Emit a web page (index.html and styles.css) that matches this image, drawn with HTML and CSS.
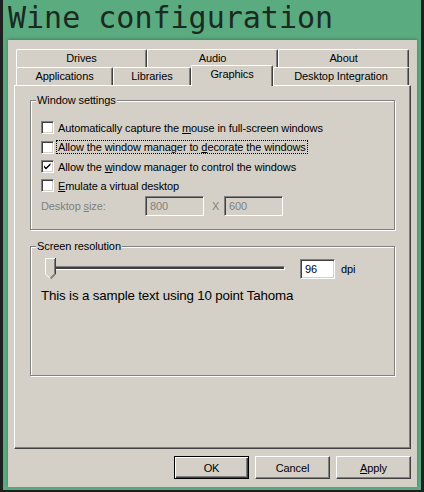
FILE: index.html
```html
<!DOCTYPE html>
<html>
<head>
<meta charset="utf-8">
<link rel="stylesheet" href="styles.css">
</head>
<body>
<div class="frame">
  <div class="title">Wine configuration</div>
  <div class="dialog">
    <div class="tabs">
      <div class="tabrow">
        <div class="tab w131">Drives</div>
        <div class="tab w131">Audio</div>
        <div class="tab w131">About</div>
      </div>
      <div class="tabrow">
        <div class="tab w97">Applications</div>
        <div class="tab w78">Libraries</div>
        <div class="tab w82 selected">Graphics</div>
        <div class="tab w136">Desktop Integration</div>
      </div>
    </div>
    <div class="panel">
      <div class="group g1">
        <div class="legend">Window settings</div>
        <div class="rows">
          <div class="row r19"><span class="cb"></span><span class="lbl">Automatically capture the <u>m</u>ouse in full-screen windows</span></div>
          <div class="row r20"><span class="cb"></span><span class="lbl focus">Allow the window manager to <u>d</u>ecorate the windows</span></div>
          <div class="row r19"><span class="cb checked"><svg width="9" height="9" viewBox="0 0 9 9"><path d="M1 3.5 L3 5.5 L7.5 1 L7.5 3 L3 7.5 L1 5.5 Z" fill="#000"/></svg></span><span class="lbl">Allow the <u>w</u>indow manager to control the windows</span></div>
          <div class="row r19"><span class="cb"></span><span class="lbl"><u>E</u>mulate a virtual desktop</span></div>
          <div class="row sizerow">
            <span class="dslabel">Desktop <u>s</u>ize:</span>
            <span class="edit disabled">800</span>
            <span class="xsep">X</span>
            <span class="edit disabled">600</span>
          </div>
        </div>
      </div>
      <div class="group g2">
        <div class="legend">Screen resolution</div>
        <div class="dpirow">
          <div class="slider">
            <div class="track"></div>
            <svg class="thumb" width="11" height="22" viewBox="0 0 11 22">
              <polygon points="0.5,0.5 10.5,0.5 10.5,16 5.5,21 0.5,16" fill="#d4d0c8"/>
              <polyline points="0.5,16 0.5,0.5 10,0.5" fill="none" stroke="#fff" stroke-width="1"/>
              <polyline points="10.5,0 10.5,16 5.5,21" fill="none" stroke="#404040" stroke-width="1"/>
              <polyline points="9.5,1 9.5,15.6 5.5,19.6" fill="none" stroke="#808080" stroke-width="1"/>
              <line x1="0.5" y1="16" x2="5" y2="20.5" stroke="#fff" stroke-width="1"/>
            </svg>
          </div>
          <span class="edit dpi">96</span>
          <span class="dpilbl">dpi</span>
        </div>
        <div class="sample">This is a sample text using 10 point Tahoma</div>
      </div>
    </div>
    <div class="buttons">
      <div class="btn default"><span>OK</span></div>
      <div class="btn"><span>Cancel</span></div>
      <div class="btn"><span><u>A</u>pply</span></div>
    </div>
  </div>
</div>
</body>
</html>
```
FILE: styles.css
```css
html, body {
  margin: 0;
  padding: 0;
}
body {
  background: #1e201f;
  width: 424px;
  height: 492px;
  overflow: hidden;
  font-family: "Liberation Sans", Arial, sans-serif;
  font-size: 11px;
  letter-spacing: -0.1px;
  color: #000;
}
.frame {
  margin: 0 3px;
  height: 490px;
  box-sizing: border-box;
  background: #5aac80;
  padding: 0 4px 3px 5px;
  display: flex;
  flex-direction: column;
}
.title {
  height: 40px;
  flex: none;
  font-family: "DejaVu Sans Mono", monospace;
  font-size: 30px;
  letter-spacing: 0;
  line-height: 35px;
  color: #1b2a21;
  white-space: nowrap;
  overflow: hidden;
}
.dialog {
  flex: 1;
  background: #d4d0c8;
  padding: 9px 6px 0 6px;
  box-shadow: 0 -1px 3px rgba(0, 0, 0, 0.25);
  display: flex;
  flex-direction: column;
}
.tabs {
  margin: 0 2px;
  display: flex;
  flex-direction: column;
}
.tabrow {
  display: flex;
  height: 18px;
}
.tab {
  box-sizing: border-box;
  height: 18px;
  border-top: 1px solid #fff;
  border-left: 1px solid #fff;
  border-right: 1px solid #404040;
  border-top-left-radius: 2px;
  border-top-right-radius: 2px;
  box-shadow: inset -1px 0 0 #808080;
  background: #d4d0c8;
  text-align: center;
  line-height: 16px;
  white-space: nowrap;
}
.w131 { width: 131px; }
.w97 { width: 97px; }
.w78 { width: 78px; }
.w82 { width: 82px; }
.w136 { width: 136px; }
.tab.selected {
  height: 21px;
  margin-top: -2px;
  line-height: 16px;
  position: relative;
  z-index: 1;
}
.panel {
  box-sizing: border-box;
  height: 364px;
  border: 1px solid;
  border-color: #fff #404040 #404040 #fff;
  box-shadow: inset -1px -1px 0 #808080;
  padding: 14px 15px 0 15px;
  display: flex;
  flex-direction: column;
}
.group {
  box-sizing: border-box;
  height: 130px;
  border: 1px solid #808080;
  box-shadow: inset 1px 1px 0 #fff, 1px 1px 0 #fff;
  display: flex;
  flex-direction: column;
}
.g2 {
  margin-top: 16px;
}
.legend {
  align-self: flex-start;
  margin: -7px 0 0 5px;
  padding: 0 1px;
  height: 13px;
  line-height: 13px;
  background: #d4d0c8;
}
.rows {
  margin-top: 11px;
  display: flex;
  flex-direction: column;
}
.row {
  display: flex;
  align-items: center;
  padding-left: 10px;
}
.r19 { height: 19px; }
.r20 { height: 20px; }
.cb {
  box-sizing: border-box;
  width: 13px;
  height: 13px;
  flex: none;
  background: #fff;
  border: 1px solid;
  border-color: #808080 #fff #fff #808080;
  box-shadow: inset 1px 1px 0 #404040, inset -1px -1px 0 #d4d0c8;
  display: flex;
  align-items: center;
  justify-content: center;
  margin-right: 4px;
}
.cb svg {
  display: block;
}
.lbl {
  white-space: nowrap;
  line-height: 12px;
}
.focus {
  outline: 1px dotted #000;
  outline-offset: 0;
  margin-left: -1px;
  padding: 0 1px;
}
.sizerow {
  height: 20px;
  margin-top: 1px;
  color: #808080;
}
.dslabel {
  width: 104px;
  flex: none;
}
.edit {
  box-sizing: border-box;
  height: 20px;
  border: 1px solid;
  border-color: #808080 #fff #fff #808080;
  box-shadow: inset 1px 1px 0 #404040, inset -1px -1px 0 #d4d0c8;
  padding-left: 4px;
  line-height: 18px;
}
.edit.disabled {
  width: 59px;
  background: #d4d0c8;
  color: #808080;
}
.xsep {
  margin: 0 5px 0 8px;
  width: 7px;
}
.dpirow {
  display: flex;
  align-items: center;
  margin-top: 5px;
  height: 21px;
  padding-left: 13px;
}
.slider {
  position: relative;
  width: 241px;
  height: 21px;
  margin-right: 15px;
}
.track {
  position: absolute;
  left: 8px;
  right: 0;
  top: 8px;
  height: 4px;
  box-sizing: border-box;
  border: 1px solid;
  border-color: #808080 #fff #fff #808080;
  background: #404040;
}
.thumb {
  position: absolute;
  left: 1px;
  top: 0;
}
.edit.dpi {
  width: 35px;
  background: #fff;
}
.dpilbl {
  margin-left: 6px;
}
.sample {
  margin: 9px 0 0 10px;
  font-size: 13.33px;
  letter-spacing: -0.16px;
  white-space: nowrap;
}
.buttons {
  margin-top: 7px;
  display: flex;
  justify-content: flex-end;
  gap: 6px;
}
.btn {
  box-sizing: border-box;
  width: 75px;
  height: 23px;
  border: 1px solid;
  border-color: #fff #404040 #404040 #fff;
  box-shadow: inset -1px -1px 0 #808080;
  display: flex;
  align-items: center;
  justify-content: center;
}
.btn.default {
  border: 1px solid #000;
  box-shadow: inset 1px 1px 0 #fff, inset -1px -1px 0 #404040, inset -2px -2px 0 #808080;
}
```
